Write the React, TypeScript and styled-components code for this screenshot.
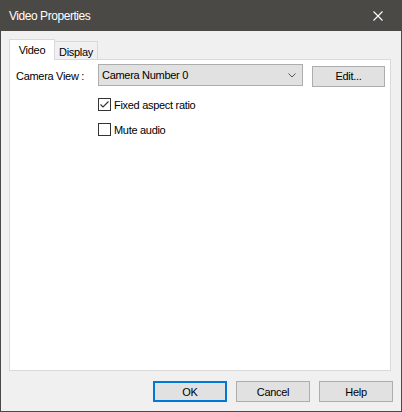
import React from 'react';
import styled, { createGlobalStyle } from 'styled-components';

const Global = createGlobalStyle`
  html, body {
    margin: 0;
    padding: 0;
    background: #f0f0f0;
  }
  * {
    box-sizing: border-box;
  }
`;

const Window = styled.div`
  width: 402px;
  height: 412px;
  display: flex;
  flex-direction: column;
  background: #f0f0f0;
  border: 1px solid #4a4946;
  border-top: none;
  font-family: "Liberation Sans", Arial, sans-serif;
  font-size: 11px;
  letter-spacing: -0.3px;
  color: #000;
`;

const TitleBar = styled.div`
  height: 31px;
  flex: 0 0 31px;
  background: #4a4946;
  color: #fff;
  display: flex;
  align-items: center;
  justify-content: space-between;
  margin: 0 -1px;
  padding: 0 8px 0 9px;
  font-size: 12px;
  letter-spacing: -0.45px;
`;

const CloseBtn = styled.div`
  width: 30px;
  height: 30px;
  display: flex;
  align-items: center;
  justify-content: center;
  margin-right: 1px;
`;

const Body = styled.div`
  flex: 1;
  display: flex;
  flex-direction: column;
  padding: 8px 10px 9px 8px;
`;

const TabRow = styled.div`
  display: flex;
  align-items: flex-end;
  height: 21px;
  position: relative;
  z-index: 1;
  margin-bottom: -1px;
`;

const Tab = styled.div<{ $active?: boolean }>`
  height: ${(p) => (p.$active ? '21px' : '19px')};
  width: ${(p) => (p.$active ? '46px' : '44px')};
  display: flex;
  align-items: center;
  justify-content: center;
  background: ${(p) => (p.$active ? '#fff' : '#f0f0f0')};
  border: 1px solid #d9d9d9;
  border-bottom: ${(p) => (p.$active ? 'none' : '1px solid #d9d9d9')};
  margin-left: ${(p) => (p.$active ? '0' : '-1px')};
  padding-top: ${(p) => (p.$active ? '0' : '2px')};
  position: relative;
  z-index: ${(p) => (p.$active ? 2 : 1)};
`;

const Panel = styled.div`
  flex: 0 0 312px;
  background: #fff;
  border: 1px solid #d9d9d9;
  padding: 4px 5px 0 6px;
  display: flex;
  flex-direction: column;
`;

const FieldRow = styled.div`
  display: flex;
  align-items: center;
  height: 22px;
`;

const Label = styled.div`
  width: 82px;
  padding-top: 2px;
`;

const Combo = styled.div`
  width: 205px;
  height: 22px;
  background: #e1e1e1;
  border: 1px solid #adadad;
  display: flex;
  align-items: center;
  justify-content: space-between;
  padding: 0 6px 0 3px;
`;

const Button = styled.div<{ $primary?: boolean }>`
  width: 74px;
  height: 21px;
  background: #e1e1e1;
  border: ${(p) => (p.$primary ? '2px solid #0078d7' : '1px solid #adadad')};
  display: flex;
  align-items: center;
  justify-content: center;
`;

const EditButton = styled(Button)`
  width: 73px;
  margin-left: 9px;
  margin-top: 2px;
`;

const CheckList = styled.div`
  display: flex;
  flex-direction: column;
  gap: 12px;
  margin-top: 12px;
  padding-left: 82px;
`;

const CheckRow = styled.div`
  display: flex;
  align-items: center;
  gap: 3px;
  height: 13px;
`;

const Box = styled.div`
  width: 13px;
  height: 13px;
  background: #fff;
  border: 1px solid #333;
  display: flex;
  align-items: center;
  justify-content: center;
`;

const Footer = styled.div`
  display: flex;
  justify-content: flex-end;
  gap: 9px;
  margin-top: 10px;
  margin-right: -2px;
`;

function Check({ checked, label }: { checked?: boolean; label: string }) {
  return (
    <CheckRow>
      <Box>
        {checked && (
          <svg width="11" height="11" viewBox="0 0 11 11">
            <path d="M1.5 5.5 L4 8 L9.5 2.5" stroke="#333" strokeWidth="1.2" fill="none" />
          </svg>
        )}
      </Box>
      <span>{label}</span>
    </CheckRow>
  );
}

export default function App() {
  return (
    <>
      <Global />
      <Window>
        <TitleBar>
          <span>Video Properties</span>
          <CloseBtn>
            <svg width="10" height="10" viewBox="0 0 10 10">
              <path d="M0.5 0.5 L9.5 9.5 M9.5 0.5 L0.5 9.5" stroke="#fff" strokeWidth="1.1" />
            </svg>
          </CloseBtn>
        </TitleBar>
        <Body>
          <TabRow>
            <Tab $active>Video</Tab>
            <Tab>Display</Tab>
          </TabRow>
          <Panel>
            <FieldRow>
              <Label>Camera View :</Label>
              <Combo>
                <span>Camera Number 0</span>
                <svg width="8" height="5" viewBox="0 0 8 5">
                  <path d="M0.5 0.5 L4 4 L7.5 0.5" stroke="#555" strokeWidth="1" fill="none" />
                </svg>
              </Combo>
              <EditButton>Edit...</EditButton>
            </FieldRow>
            <CheckList>
              <Check checked label="Fixed aspect ratio" />
              <Check label="Mute audio" />
            </CheckList>
          </Panel>
          <Footer>
            <Button $primary>OK</Button>
            <Button>Cancel</Button>
            <Button>Help</Button>
          </Footer>
        </Body>
      </Window>
    </>
  );
}
